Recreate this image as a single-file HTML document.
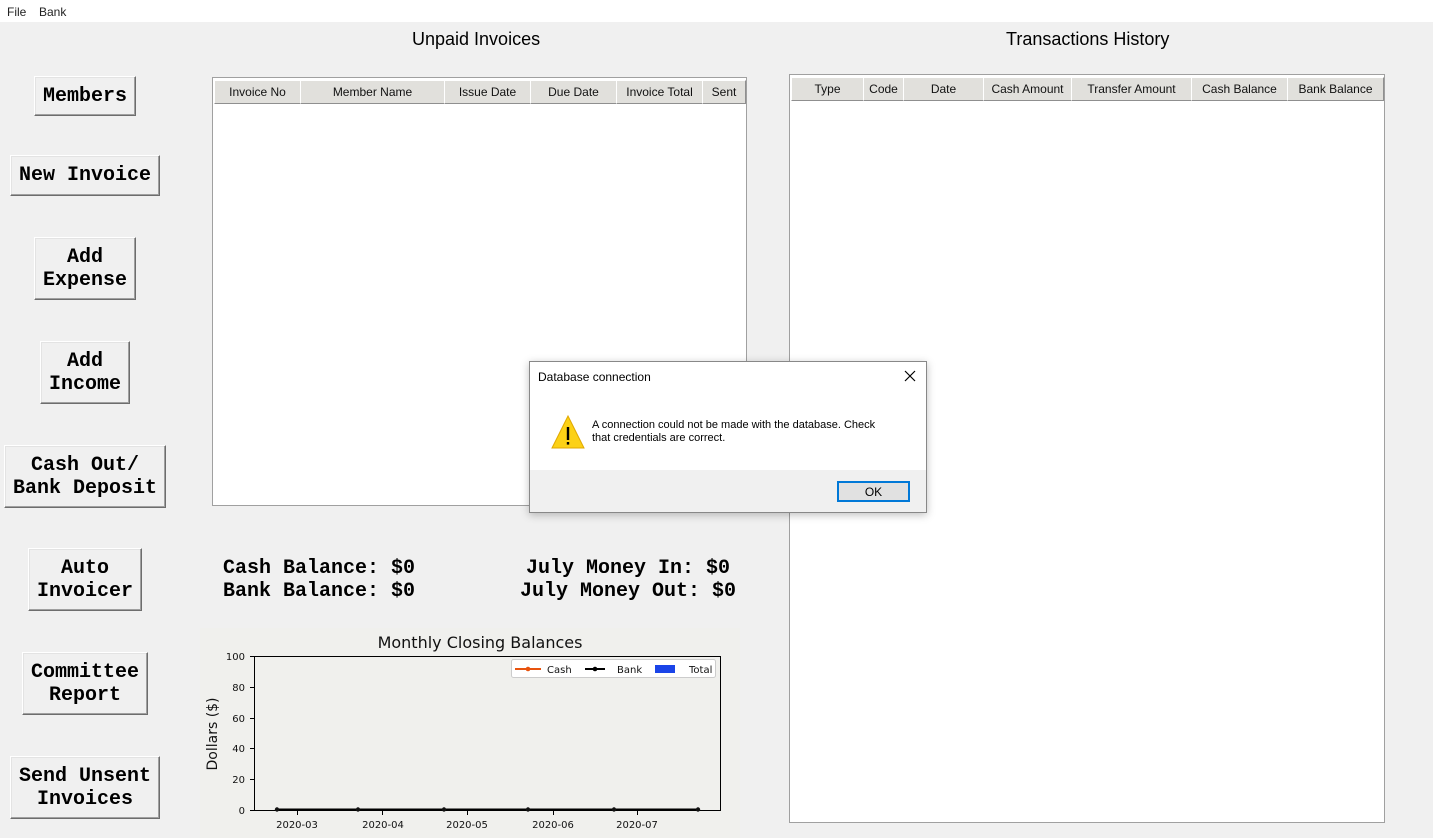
<!DOCTYPE html>
<html><head><meta charset="utf-8"><style>
*{box-sizing:border-box;margin:0;padding:0}
body{width:1433px;height:838px;background:#f0f0f0;position:relative;overflow:hidden;font-family:"Liberation Sans",sans-serif}
.a{position:absolute}
.menu{left:0;top:0;width:1433px;height:22px;background:#fff;font-size:12px;color:#222}
.btn{position:absolute;background:#f0f0f0;border:1px solid;border-color:#fff #6d6d6d #6d6d6d #fff;box-shadow:inset -1px -1px 0 #a0a0a0,inset 1px 1px 0 #e3e3e3;font-family:"Liberation Mono",monospace;font-weight:bold;font-size:20px;line-height:23px;text-align:center;display:flex;align-items:center;justify-content:center;color:#000}
.tbl{position:absolute;background:#fff;border:1px solid #a0a0a0}
.hd{position:absolute;top:2px;height:24px;background:#e1e0dc;border:1px solid;border-color:#fff #8f8f8f #8f8f8f #fff;font-size:12px;display:flex;align-items:center;justify-content:center;color:#111}
.ttl{font-size:18px;color:#000}
.mono{font-family:"Liberation Mono",monospace;font-weight:bold;font-size:20px;line-height:23px;white-space:pre}
</style></head><body>
<div class="a menu"><span class="a" style="left:7px;top:5px">File</span><span class="a" style="left:39px;top:5px">Bank</span></div>

<div class="a ttl" style="left:412px;top:29px">Unpaid Invoices</div>
<div class="a ttl" style="left:1006px;top:29px">Transactions History</div>

<div class="btn" style="left:34px;top:76px;width:102px;height:40px">Members</div>
<div class="btn" style="left:10px;top:155px;width:150px;height:41px">New Invoice</div>
<div class="btn" style="left:34px;top:237px;width:102px;height:63px">Add<br>Expense</div>
<div class="btn" style="left:40px;top:341px;width:90px;height:63px">Add<br>Income</div>
<div class="btn" style="left:4px;top:445px;width:162px;height:63px">Cash Out/<br>Bank Deposit</div>
<div class="btn" style="left:28px;top:548px;width:114px;height:63px">Auto<br>Invoicer</div>
<div class="btn" style="left:22px;top:652px;width:126px;height:63px">Committee<br>Report</div>
<div class="btn" style="left:10px;top:756px;width:150px;height:63px">Send Unsent<br>Invoices</div>

<div class="tbl" style="left:212px;top:77px;width:535px;height:429px">
<div class="hd" style="left:1px;width:87px">Invoice No</div>
<div class="hd" style="left:87px;width:145px">Member Name</div>
<div class="hd" style="left:231px;width:87px">Issue Date</div>
<div class="hd" style="left:317px;width:87px">Due Date</div>
<div class="hd" style="left:403px;width:87px">Invoice Total</div>
<div class="hd" style="left:489px;width:44px">Sent</div>
</div>

<div class="tbl" style="left:789px;top:74px;width:596px;height:749px">
<div class="hd" style="left:1px;width:73px">Type</div>
<div class="hd" style="left:73px;width:41px">Code</div>
<div class="hd" style="left:113px;width:81px">Date</div>
<div class="hd" style="left:193px;width:89px">Cash Amount</div>
<div class="hd" style="left:281px;width:121px">Transfer Amount</div>
<div class="hd" style="left:401px;width:97px">Cash Balance</div>
<div class="hd" style="left:497px;width:97px">Bank Balance</div>
</div>

<div class="a mono" style="left:223px;top:557px">Cash Balance: $0
Bank Balance: $0</div>
<div class="a mono" style="left:526px;top:557px">July Money In: $0</div>
<div class="a mono" style="left:520px;top:580px">July Money Out: $0</div>

<svg class="a" style="left:200px;top:628px" width="540" height="210" viewBox="200 628 540 210">
<rect x="200" y="628" width="540" height="210" fill="#f0f0ed"/>
<text x="480" y="648" text-anchor="middle" font-family="DejaVu Sans,sans-serif" font-size="16" fill="#111">Monthly Closing Balances</text>
<rect x="254.5" y="656.5" width="466" height="154" fill="#f0f0ed" stroke="#000"/>
<g font-family="DejaVu Sans,sans-serif" font-size="10" fill="#111" text-anchor="end">
<text x="245" y="814">0</text><text x="245" y="783">20</text><text x="245" y="752">40</text><text x="245" y="722">60</text><text x="245" y="691">80</text><text x="245" y="660">100</text>
</g>
<g stroke="#000"><line x1="250" y1="810.5" x2="254" y2="810.5"/><line x1="250" y1="779.5" x2="254" y2="779.5"/><line x1="250" y1="748.5" x2="254" y2="748.5"/><line x1="250" y1="718.5" x2="254" y2="718.5"/><line x1="250" y1="687.5" x2="254" y2="687.5"/><line x1="250" y1="656.5" x2="254" y2="656.5"/>
<line x1="297.5" y1="811" x2="297.5" y2="815"/><line x1="382.5" y1="811" x2="382.5" y2="815"/><line x1="467.5" y1="811" x2="467.5" y2="815"/><line x1="553.5" y1="811" x2="553.5" y2="815"/><line x1="637.5" y1="811" x2="637.5" y2="815"/></g>
<g font-family="DejaVu Sans,sans-serif" font-size="10" fill="#111" text-anchor="middle">
<text x="297" y="828">2020-03</text><text x="383" y="828">2020-04</text><text x="467" y="828">2020-05</text><text x="553" y="828">2020-06</text><text x="637" y="828">2020-07</text>
</g>
<text transform="translate(217 734) rotate(-90)" text-anchor="middle" font-family="DejaVu Sans,sans-serif" font-size="14" fill="#111">Dollars ($)</text>
<line x1="277" y1="809.5" x2="698" y2="809.5" stroke="#000" stroke-width="2"/>
<g fill="#111"><circle cx="277" cy="809.5" r="2.2"/><circle cx="358" cy="809.5" r="2.2"/><circle cx="444" cy="809.5" r="2.2"/><circle cx="528" cy="809.5" r="2.2"/><circle cx="614" cy="809.5" r="2.2"/><circle cx="698" cy="809.5" r="2.2"/></g>
<rect x="511.5" y="659.5" width="204" height="18" fill="#fff" stroke="#ccc" rx="2"/>
<line x1="515" y1="669" x2="541" y2="669" stroke="#e8530e" stroke-width="2"/><circle cx="528" cy="669" r="2.3" fill="#e8530e"/>
<text x="547" y="673" font-family="DejaVu Sans,sans-serif" font-size="10" fill="#111">Cash</text>
<line x1="585" y1="669" x2="605" y2="669" stroke="#000" stroke-width="2"/><circle cx="595" cy="669" r="2.3"/>
<text x="617" y="673" font-family="DejaVu Sans,sans-serif" font-size="10" fill="#111">Bank</text>
<rect x="655" y="665" width="20" height="8" fill="#1a44e8"/>
<text x="689" y="673" font-family="DejaVu Sans,sans-serif" font-size="10" fill="#111">Total</text>
</svg>

<div class="a" style="left:529px;top:361px;width:398px;height:152px;background:#fff;border:1px solid #888;box-shadow:0 2px 8px rgba(0,0,0,.25)">
<div class="a" style="left:8px;top:8px;font-size:12px;color:#000">Database connection</div>
<svg class="a" style="left:374px;top:8px" width="12" height="12"><path d="M1 1L11 11M11 1L1 11" stroke="#000" stroke-width="1.2"/></svg>
<svg class="a" style="left:21px;top:53px" width="34" height="34"><path d="M17 1L33 33H1Z" fill="#fcd116" stroke="#e0a800" stroke-width="1"/><rect x="15.8" y="12" width="2.4" height="13" fill="#000"/><rect x="15.8" y="27" width="2.4" height="2.6" fill="#000"/></svg>
<div class="a" style="left:62px;top:57px;width:290px;font-size:11px;line-height:13px;color:#000">A connection could not be made with the database. Check that credentials are correct.</div>
<div class="a" style="left:0;top:108px;width:396px;height:42px;background:#f0f0f0"></div>
<div class="a" style="left:307px;top:119px;width:73px;height:21px;background:#e1e1e1;border:2px solid #0078d7;font-size:12px;display:flex;align-items:center;justify-content:center">OK</div>
</div>
</body></html>
